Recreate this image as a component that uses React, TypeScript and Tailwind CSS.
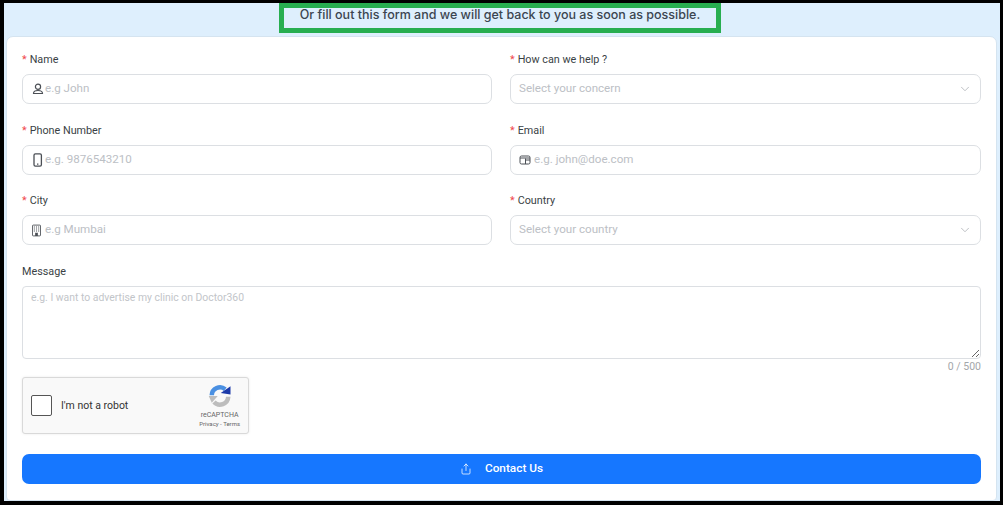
import { ChevronDown, Share } from "lucide-react";
import type { ReactNode } from "react";

function Label({ text, required = true }: { text: string; required?: boolean }) {
  return (
    <div className="flex h-[17px] items-center text-[10.8px] text-[#3a3f45]">
      {required && <span className="mr-[3px] text-[#f0484c]">*</span>}
      {text}
    </div>
  );
}

function Field({
  label,
  placeholder,
  icon,
  select,
}: {
  label: string;
  placeholder: string;
  icon?: ReactNode;
  select?: boolean;
}) {
  return (
    <div className="flex flex-col gap-[5px]">
      <Label text={label} />
      <div className="flex h-[30px] items-center rounded-[7px] border border-[#dcdfe3] bg-white px-[8px] text-[11.6px] text-[#bcc0c5]">
        {icon}
        <span className="flex-1">{placeholder}</span>
        {select && <ChevronDown className="h-[14px] w-[14px] text-[#b3b7bc]" strokeWidth={1.5} />}
      </div>
    </div>
  );
}

function UserIcon() {
  return (
    <svg viewBox="0 0 14 14" className="h-[14px] w-[14px] text-[#4b4f55]" fill="none" stroke="currentColor" strokeWidth="1.2">
      <circle cx="7" cy="4.8" r="2.6" />
      <path d="M2.5 11.5c0-1.8 1.5-3 4.5-3s4.5 1.2 4.5 3z" />
    </svg>
  );
}

function PhoneIcon() {
  return (
    <svg viewBox="0 0 14 14" className="h-[14px] w-[14px] text-[#4b4f55]" fill="none" stroke="currentColor" strokeWidth="1.3">
      <rect x="3" y="0.8" width="7.4" height="12.4" rx="1.4" />
      <path d="M6 11.2h1.4" />
    </svg>
  );
}

function CardIcon() {
  return (
    <svg viewBox="0 0 12 10" className="mr-[3px] h-[10px] w-[12px] text-[#4b4f55]" fill="none" stroke="currentColor">
      <path d="M1 2.5a1.5 1.5 0 0 1 1.5-1.5h7a1.5 1.5 0 0 1 1.5 1.5v5a1.5 1.5 0 0 1-1.5 1.5h-7A1.5 1.5 0 0 1 1 7.5z" />
      <path d="M6.5 3.5v5.5M6.5 5h4.5M1 3h10" />
    </svg>
  );
}

function BuildingIcon() {
  return (
    <svg viewBox="0 0 10 13" className="mr-[4px] ml-[1px] h-[13px] w-[9px] text-[#4b4f55]">
      <rect x="0.5" y="0.5" width="9" height="12" rx="1" fill="none" stroke="currentColor" />
      <path
        d="M2 2h1.2v1.2H2zM4.4 2h1.2v1.2H4.4zM6.8 2H8v1.2H6.8zM2 4.2h1.2v1.2H2zM4.4 4.2h1.2v1.2H4.4zM6.8 4.2H8v1.2H6.8zM2 6.4h1.2v1.2H2zM4.4 6.4h1.2v1.2H4.4zM6.8 6.4H8v1.2H6.8zM3.5 9h3v3.5h-3z"
        fill="currentColor"
      />
    </svg>
  );
}

function RecaptchaLogo() {
  return (
    <svg viewBox="0 0 32 32" className="h-[24px] w-[24px]" fill="none">
      <path d="M5 15a11 11 0 0 1 18-8" stroke="#4a90e2" strokeWidth="6" />
      <path d="M17 12l13-9v11z" fill="#1c3aa9" />
      <path d="M27 17a11 11 0 0 1-19 7" stroke="#bdbdbd" strokeWidth="6" />
      <path d="M1 16h12l-8 9z" fill="#bdbdbd" />
    </svg>
  );
}

function Recaptcha() {
  return (
    <div className="flex h-[57px] w-[227px] items-center rounded-[3px] border border-[#d9d9d9] bg-[#f9f9f9] pl-[8px] shadow-[0_0_3px_rgba(0,0,0,0.08)]">
      <div className="h-[21px] w-[21px] rounded-[2px] border border-[#555] bg-white" />
      <span className="ml-[9px] flex-1 font-['Roboto',sans-serif] text-[10.5px] text-[#333]">I'm not a robot</span>
      <div className="mr-[8px] flex flex-col items-center font-['Roboto',sans-serif] text-[#666]">
        <RecaptchaLogo />
        <span className="mt-[3px] text-[7px] leading-[9px]">reCAPTCHA</span>
        <span className="text-[6px] leading-[8px]">Privacy - Terms</span>
      </div>
    </div>
  );
}

export default function App() {
  return (
    <div className="h-[505px] w-[1003px] overflow-hidden bg-black pb-[4px] pl-[4px] pr-[3px] pt-[3px] font-['Roboto',sans-serif]">
      <div className="flex h-full flex-col bg-[#deeffd] pl-[2px] pr-[3px]">
        <div className="flex justify-center pr-[3px]">
          <div className="flex h-[30px] w-[442px] justify-center border-[5px] border-[#27ae50] font-['Inter',sans-serif] text-[12.5px] font-medium leading-[14px] text-[#3b4550]">
            Or fill out this form and we will get back to you as soon as possible.
          </div>
        </div>
        <form className="mt-[3px] flex-1 rounded-t-[7px] rounded-b-[4px] border border-[#d5e4f0] bg-white px-[15px] pt-[15px]">
          <div className="grid grid-cols-[470px_1fr] gap-x-[18px] gap-y-[18.5px]">
            <Field label="Name" placeholder="e.g John" icon={<UserIcon />} />
            <Field label="How can we help ?" placeholder="Select your concern" select />
            <Field label="Phone Number" placeholder="e.g. 9876543210" icon={<PhoneIcon />} />
            <Field label="Email" placeholder="e.g. john@doe.com" icon={<CardIcon />} />
            <Field label="City" placeholder="e.g Mumbai" icon={<BuildingIcon />} />
            <Field label="Country" placeholder="Select your country" select />
          </div>
          <div className="mt-[19px] flex flex-col gap-[5px]">
            <Label text="Message" required={false} />
            <textarea
              readOnly
              placeholder="e.g. I want to advertise my clinic on Doctor360"
              className="h-[73px] rounded-[4px] border border-[#dcdfe3] px-2 py-[3px] text-[10.4px] placeholder:text-[#c2c5c9]"
            />
          </div>
          <div className="text-right text-[10.5px] leading-[15px] text-[#a3a6aa]">0 / 500</div>
          <div className="mt-[3px]">
            <Recaptcha />
          </div>
          <button
            type="button"
            className="mt-[20px] flex h-[30px] w-full items-center justify-center gap-[13px] rounded-[7px] bg-[#1677ff] text-[11.8px] font-medium text-white"
          >
            <Share className="h-[12px] w-[12px]" strokeWidth={1.5} />
            Contact Us
          </button>
        </form>
      </div>
    </div>
  );
}
